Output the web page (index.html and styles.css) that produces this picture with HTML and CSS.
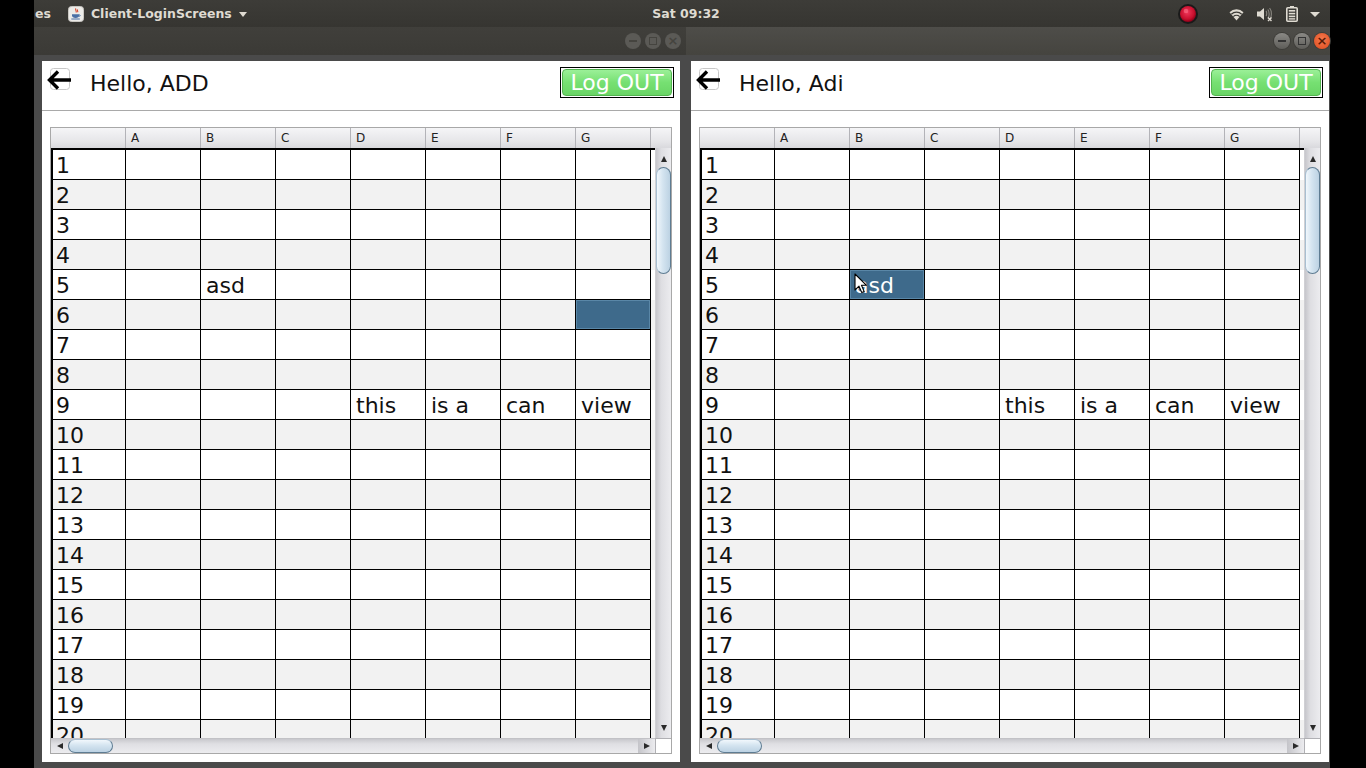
FILE: index.html
```html
<!DOCTYPE html>
<html>
<head>
<meta charset="utf-8">
<link rel="stylesheet" href="styles.css">
</head>
<body>
<div class="main">
  <div class="topbar">
    <div class="tb-left">
      <span class="tb-es">es</span>
      <svg class="java" width="16" height="16" viewBox="0 0 16 16"><rect x="0.5" y="0.5" width="15" height="15" rx="3" fill="#ecebe8" stroke="#c9c7c2"/><path d="M8 2.5c-1.5 1.5 1.2 2.2 0 4M9.6 3.5c-1 1 .8 1.5 0 2.8" stroke="#d8452c" stroke-width="1.1" fill="none"/><path d="M4 8.3h7.2v1.2c0 1.5-1.5 2.4-3.6 2.4S4 11 4 9.5z" fill="#4a6fa5"/><path d="M11.2 8.8c1.4 0 1.4 1.6 0 1.6" stroke="#4a6fa5" stroke-width="0.9" fill="none"/><path d="M3.3 13h8.5" stroke="#4a6fa5" stroke-width="1"/></svg>
      <span class="tb-title">Client-LoginScreens</span>
      <span class="tri"></span>
    </div>
    <div class="tb-clock">Sat 09:32</div>
    <div class="tb-right">
      <svg class="rec" width="22" height="22" viewBox="0 0 22 22"><defs><radialGradient id="rg" cx="0.45" cy="0.4" r="0.6"><stop offset="0" stop-color="#f0365a"/><stop offset="0.7" stop-color="#c8102e"/><stop offset="1" stop-color="#8a0018"/></radialGradient></defs><circle cx="11" cy="11" r="10" fill="#1a1a1a"/><circle cx="11" cy="11" r="8" fill="url(#rg)"/><circle cx="9" cy="8" r="2.3" fill="#ff7a90" opacity="0.55"/></svg>
      <svg class="wifi" width="15" height="14" viewBox="0 0 15 14"><path d="M7.5 13.5L0.5 5.2A10 10 0 0 1 14.5 5.2Z" fill="#dfdbd2"/><path d="M2.3 7.3A7.5 7.5 0 0 1 12.7 7.3" stroke="#3a3935" stroke-width="1.2" fill="none"/><path d="M4.3 9.6A4.6 4.6 0 0 1 10.7 9.6" stroke="#3a3935" stroke-width="1.2" fill="none"/></svg>
      <svg class="spk" width="17" height="16" viewBox="0 0 17 16"><path d="M1 5.5h3l4-3.5v12l-4-3.5H1z" fill="#dfdbd2"/><path d="M10 5c1 1 1 4 0 5M11.8 3.5c1.8 2 1.8 7 0 9M13.6 2c2.4 3 2.4 9 0 12" stroke="#8a8780" stroke-width="1.1" fill="none"/><path d="M12 11.5l3.5 3.5M15.5 11.5L12 15" stroke="#dfdbd2" stroke-width="1.4"/></svg>
      <svg class="bat" width="12" height="16" viewBox="0 0 12 16"><rect x="4" y="0" width="4" height="2" fill="#dfdbd2"/><rect x="0.8" y="1.8" width="10.4" height="13.4" rx="1" fill="none" stroke="#dfdbd2" stroke-width="1.6"/><rect x="2.8" y="4" width="6.4" height="1.6" fill="#dfdbd2"/><rect x="2.8" y="6.8" width="6.4" height="1.6" fill="#dfdbd2"/><rect x="2.8" y="9.6" width="6.4" height="1.6" fill="#dfdbd2"/><rect x="2.8" y="12.2" width="6.4" height="1.4" fill="#dfdbd2"/></svg>
      <span class="tri tri-r"></span>
    </div>
  </div>

  <div class="windows">
    <div class="win win-l">
      <div class="titlebar tb-inactive">
        <span class="wbtn"><span class="sym-min"></span></span>
        <span class="wbtn"><span class="sym-max"></span></span>
        <span class="wbtn"><span class="sym-x">×</span></span>
      </div>
      <div class="frame frame-l">
        <div class="panel">
          <div class="phead">
            <svg class="back" width="26" height="24" viewBox="0 0 26 24"><rect x="3.5" y="0.5" width="19" height="21" rx="3" fill="none" stroke="#c8c8c8"/><path d="M24 12H3M11 3.5L2.5 12L11 20.5" stroke="#000" stroke-width="3.4" fill="none" stroke-linejoin="miter"/></svg>
            <span class="hello">Hello, ADD</span>
            <div class="logout"><div class="logout-in">Log OUT</div></div>
          </div>
          <div class="sheet">
            <div class="colhead">
              <div class="hc hc0"></div><div class="hc">A</div><div class="hc">B</div><div class="hc">C</div><div class="hc">D</div><div class="hc">E</div><div class="hc">F</div><div class="hc">G</div><div class="hc-end"></div>
            </div>
            <div class="viewport">
              <div class="row"><div class="rh">1</div><div class="c"></div><div class="c"></div><div class="c"></div><div class="c"></div><div class="c"></div><div class="c"></div><div class="c"></div></div>
              <div class="row alt"><div class="rh">2</div><div class="c"></div><div class="c"></div><div class="c"></div><div class="c"></div><div class="c"></div><div class="c"></div><div class="c"></div></div>
              <div class="row"><div class="rh">3</div><div class="c"></div><div class="c"></div><div class="c"></div><div class="c"></div><div class="c"></div><div class="c"></div><div class="c"></div></div>
              <div class="row alt"><div class="rh">4</div><div class="c"></div><div class="c"></div><div class="c"></div><div class="c"></div><div class="c"></div><div class="c"></div><div class="c"></div></div>
              <div class="row"><div class="rh">5</div><div class="c"></div><div class="c">asd</div><div class="c"></div><div class="c"></div><div class="c"></div><div class="c"></div><div class="c"></div></div>
              <div class="row alt"><div class="rh">6</div><div class="c"></div><div class="c"></div><div class="c"></div><div class="c"></div><div class="c"></div><div class="c"></div><div class="c sel"></div></div>
              <div class="row"><div class="rh">7</div><div class="c"></div><div class="c"></div><div class="c"></div><div class="c"></div><div class="c"></div><div class="c"></div><div class="c"></div></div>
              <div class="row alt"><div class="rh">8</div><div class="c"></div><div class="c"></div><div class="c"></div><div class="c"></div><div class="c"></div><div class="c"></div><div class="c"></div></div>
              <div class="row"><div class="rh">9</div><div class="c"></div><div class="c"></div><div class="c"></div><div class="c">this</div><div class="c">is a</div><div class="c">can</div><div class="c">view</div></div>
              <div class="row alt"><div class="rh">10</div><div class="c"></div><div class="c"></div><div class="c"></div><div class="c"></div><div class="c"></div><div class="c"></div><div class="c"></div></div>
              <div class="row"><div class="rh">11</div><div class="c"></div><div class="c"></div><div class="c"></div><div class="c"></div><div class="c"></div><div class="c"></div><div class="c"></div></div>
              <div class="row alt"><div class="rh">12</div><div class="c"></div><div class="c"></div><div class="c"></div><div class="c"></div><div class="c"></div><div class="c"></div><div class="c"></div></div>
              <div class="row"><div class="rh">13</div><div class="c"></div><div class="c"></div><div class="c"></div><div class="c"></div><div class="c"></div><div class="c"></div><div class="c"></div></div>
              <div class="row alt"><div class="rh">14</div><div class="c"></div><div class="c"></div><div class="c"></div><div class="c"></div><div class="c"></div><div class="c"></div><div class="c"></div></div>
              <div class="row"><div class="rh">15</div><div class="c"></div><div class="c"></div><div class="c"></div><div class="c"></div><div class="c"></div><div class="c"></div><div class="c"></div></div>
              <div class="row alt"><div class="rh">16</div><div class="c"></div><div class="c"></div><div class="c"></div><div class="c"></div><div class="c"></div><div class="c"></div><div class="c"></div></div>
              <div class="row"><div class="rh">17</div><div class="c"></div><div class="c"></div><div class="c"></div><div class="c"></div><div class="c"></div><div class="c"></div><div class="c"></div></div>
              <div class="row alt"><div class="rh">18</div><div class="c"></div><div class="c"></div><div class="c"></div><div class="c"></div><div class="c"></div><div class="c"></div><div class="c"></div></div>
              <div class="row"><div class="rh">19</div><div class="c"></div><div class="c"></div><div class="c"></div><div class="c"></div><div class="c"></div><div class="c"></div><div class="c"></div></div>
              <div class="row alt"><div class="rh">20</div><div class="c"></div><div class="c"></div><div class="c"></div><div class="c"></div><div class="c"></div><div class="c"></div><div class="c"></div></div>
            </div>
            <div class="vsb">
              <div class="sb-btn"><span class="ar-up"></span></div>
              <div class="vthumb"></div>
              <div class="sb-fill"></div>
              <div class="sb-btn sb-btn-d"><span class="ar-down"></span></div>
            </div>
            <div class="hsb">
              <div class="sb-btn-h"><span class="ar-left"></span></div>
              <div class="hthumb"></div>
              <div class="sb-fill"></div>
              <div class="sb-btn-h sb-btn-r"><span class="ar-right"></span></div>
            </div>
            <div class="corner"></div>
          </div>
        </div>
      </div>
    </div>

    <div class="win win-r">
      <div class="titlebar tb-active">
        <span class="wbtn wbtn-a"><span class="sym-min"></span></span>
        <span class="wbtn wbtn-a"><span class="sym-max"></span></span>
        <span class="wbtn wbtn-close"><span class="sym-x">×</span></span>
      </div>
      <div class="frame frame-r">
        <div class="panel">
          <div class="phead">
            <svg class="back" width="26" height="24" viewBox="0 0 26 24"><rect x="3.5" y="0.5" width="19" height="21" rx="3" fill="none" stroke="#c8c8c8"/><path d="M24 12H3M11 3.5L2.5 12L11 20.5" stroke="#000" stroke-width="3.4" fill="none" stroke-linejoin="miter"/></svg>
            <span class="hello">Hello, Adi</span>
            <div class="logout"><div class="logout-in">Log OUT</div></div>
          </div>
          <div class="sheet">
            <div class="colhead">
              <div class="hc hc0"></div><div class="hc">A</div><div class="hc">B</div><div class="hc">C</div><div class="hc">D</div><div class="hc">E</div><div class="hc">F</div><div class="hc">G</div><div class="hc-end"></div>
            </div>
            <div class="viewport">
              <div class="row"><div class="rh">1</div><div class="c"></div><div class="c"></div><div class="c"></div><div class="c"></div><div class="c"></div><div class="c"></div><div class="c"></div></div>
              <div class="row alt"><div class="rh">2</div><div class="c"></div><div class="c"></div><div class="c"></div><div class="c"></div><div class="c"></div><div class="c"></div><div class="c"></div></div>
              <div class="row"><div class="rh">3</div><div class="c"></div><div class="c"></div><div class="c"></div><div class="c"></div><div class="c"></div><div class="c"></div><div class="c"></div></div>
              <div class="row alt"><div class="rh">4</div><div class="c"></div><div class="c"></div><div class="c"></div><div class="c"></div><div class="c"></div><div class="c"></div><div class="c"></div></div>
              <div class="row"><div class="rh">5</div><div class="c"></div><div class="c sel">asd<svg class="cursor" width="13" height="21" viewBox="0 0 13 21"><path d="M1 1V17L5 13.2L7.8 19.6L10.2 18.6L7.5 12.3H12.5Z" fill="#fff" stroke="#000" stroke-width="1.1" stroke-linejoin="round"/></svg></div><div class="c"></div><div class="c"></div><div class="c"></div><div class="c"></div><div class="c"></div></div>
              <div class="row alt"><div class="rh">6</div><div class="c"></div><div class="c"></div><div class="c"></div><div class="c"></div><div class="c"></div><div class="c"></div><div class="c"></div></div>
              <div class="row"><div class="rh">7</div><div class="c"></div><div class="c"></div><div class="c"></div><div class="c"></div><div class="c"></div><div class="c"></div><div class="c"></div></div>
              <div class="row alt"><div class="rh">8</div><div class="c"></div><div class="c"></div><div class="c"></div><div class="c"></div><div class="c"></div><div class="c"></div><div class="c"></div></div>
              <div class="row"><div class="rh">9</div><div class="c"></div><div class="c"></div><div class="c"></div><div class="c">this</div><div class="c">is a</div><div class="c">can</div><div class="c">view</div></div>
              <div class="row alt"><div class="rh">10</div><div class="c"></div><div class="c"></div><div class="c"></div><div class="c"></div><div class="c"></div><div class="c"></div><div class="c"></div></div>
              <div class="row"><div class="rh">11</div><div class="c"></div><div class="c"></div><div class="c"></div><div class="c"></div><div class="c"></div><div class="c"></div><div class="c"></div></div>
              <div class="row alt"><div class="rh">12</div><div class="c"></div><div class="c"></div><div class="c"></div><div class="c"></div><div class="c"></div><div class="c"></div><div class="c"></div></div>
              <div class="row"><div class="rh">13</div><div class="c"></div><div class="c"></div><div class="c"></div><div class="c"></div><div class="c"></div><div class="c"></div><div class="c"></div></div>
              <div class="row alt"><div class="rh">14</div><div class="c"></div><div class="c"></div><div class="c"></div><div class="c"></div><div class="c"></div><div class="c"></div><div class="c"></div></div>
              <div class="row"><div class="rh">15</div><div class="c"></div><div class="c"></div><div class="c"></div><div class="c"></div><div class="c"></div><div class="c"></div><div class="c"></div></div>
              <div class="row alt"><div class="rh">16</div><div class="c"></div><div class="c"></div><div class="c"></div><div class="c"></div><div class="c"></div><div class="c"></div><div class="c"></div></div>
              <div class="row"><div class="rh">17</div><div class="c"></div><div class="c"></div><div class="c"></div><div class="c"></div><div class="c"></div><div class="c"></div><div class="c"></div></div>
              <div class="row alt"><div class="rh">18</div><div class="c"></div><div class="c"></div><div class="c"></div><div class="c"></div><div class="c"></div><div class="c"></div><div class="c"></div></div>
              <div class="row"><div class="rh">19</div><div class="c"></div><div class="c"></div><div class="c"></div><div class="c"></div><div class="c"></div><div class="c"></div><div class="c"></div></div>
              <div class="row alt"><div class="rh">20</div><div class="c"></div><div class="c"></div><div class="c"></div><div class="c"></div><div class="c"></div><div class="c"></div><div class="c"></div></div>
            </div>
            <div class="vsb">
              <div class="sb-btn"><span class="ar-up"></span></div>
              <div class="vthumb"></div>
              <div class="sb-fill"></div>
              <div class="sb-btn sb-btn-d"><span class="ar-down"></span></div>
            </div>
            <div class="hsb">
              <div class="sb-btn-h"><span class="ar-left"></span></div>
              <div class="hthumb"></div>
              <div class="sb-fill"></div>
              <div class="sb-btn-h sb-btn-r"><span class="ar-right"></span></div>
            </div>
            <div class="corner"></div>
          </div>
        </div>
      </div>
    </div>
  </div>
</div>
</body>
</html>
```

FILE: styles.css
```css
* { box-sizing: border-box; }
html, body { margin: 0; padding: 0; }
body {
  background: #000;
  width: 1366px;
  height: 768px;
  overflow: hidden;
  font-family: "DejaVu Sans", sans-serif;
}
.main {
  margin-left: 34px;
  width: 1296px;
  height: 768px;
  display: flex;
  flex-direction: column;
}

/* ---------- top panel ---------- */
.topbar {
  height: 27px;
  flex: none;
  background: linear-gradient(#3d3c38, #363531);
  color: #dfdbd2;
  display: grid;
  grid-template-columns: 1fr auto 1fr;
  align-items: center;
  font-size: 12.5px;
  font-weight: bold;
}
.tb-left { display: flex; align-items: center; }
.tb-es { margin-left: 1px; }
.java { margin-left: 17px; display: block; }
.tb-title { margin-left: 7px; }
.tri {
  display: inline-block;
  width: 0; height: 0;
  border-left: 4.5px solid transparent;
  border-right: 4.5px solid transparent;
  border-top: 5px solid #dfdbd2;
  margin-left: 7px;
  margin-top: 1px;
}
.tb-clock { padding-left: 8px; }
.tb-right {
  justify-self: end;
  display: flex;
  align-items: center;
  padding-right: 10px;
}
.rec { display: block; margin-top: 1px; }
.wifi { display: block; margin-left: 30px; }
.spk { display: block; margin-left: 12px; }
.bat { display: block; margin-left: 13px; }
.tri-r { margin-left: 12px; border-left-width: 5px; border-right-width: 5px; border-top-width: 5px; }

/* ---------- windows ---------- */
.windows { display: flex; flex: 1; min-height: 0; }
.win { display: flex; flex-direction: column; }
.win-l { width: 652px; }
.win-r { width: 644px; }
.titlebar {
  height: 28px;
  flex: none;
  display: flex;
  justify-content: flex-end;
  align-items: center;
  gap: 4px;
}
.tb-inactive { background: linear-gradient(#403f3b, #3b3a36); padding-right: 5px; }
.tb-active { background: linear-gradient(#4e4d49, #45443f); padding-right: 0; }
.wbtn {
  width: 16px; height: 16px;
  border-radius: 50%;
  background: #5b5a56;
  display: flex;
  align-items: center;
  justify-content: center;
  color: #45443f;
}
.wbtn-a {
  background: linear-gradient(#8a8985, #5e5d59);
  box-shadow: 0 0 0 1px #3e3d39;
  color: #333;
}
.wbtn-close {
  background: radial-gradient(circle at 50% 40%, #f47a4f, #df4a1c);
  box-shadow: 0 0 0 1px #3e3d39;
  color: #5a1a06;
}
.sym-min { width: 8px; height: 1.5px; background: currentColor; }
.sym-max { width: 8px; height: 8px; border: 1.3px solid currentColor; }
.sym-x { font-size: 13px; line-height: 16px; font-weight: bold; }

.frame { flex: 1; background: #4a4a4a; min-height: 0; }
.frame-l { padding: 6px 6px 6px 8px; }
.frame-r { padding: 6px 1px 6px 5px; }
.panel {
  background: #fff;
  height: 100%;
  display: flex;
  flex-direction: column;
}

/* ---------- header ---------- */
.phead {
  height: 50px;
  flex: none;
  border-bottom: 1px solid #a9a9a9;
  display: flex;
  align-items: flex-start;
  padding: 6px 6px 0 5px;
}
.back { display: block; margin-top: 1px; }
.hello {
  margin-left: 17px;
  padding-top: 2px;
  font-size: 22px;
  line-height: 30px;
  color: #111;
}
.logout {
  margin-left: auto;
  width: 114px;
  height: 31px;
  border: 1px solid #000;
  padding: 1px;
}
.logout-in {
  height: 100%;
  border-radius: 4px;
  border: 1px solid #52b44f;
  background: linear-gradient(#9bf098, #76e072 50%, #6ad566);
  color: #fff;
  font-size: 22px;
  line-height: 26px;
  text-align: center;
}

/* ---------- sheet ---------- */
.sheet {
  margin: 16px 8px 0 8px;
  height: 627px;
  border: 1px solid #a8a8a8;
  display: grid;
  grid-template-columns: 604px 16px;
  grid-template-rows: 20px 590px 15px;
}
.colhead {
  grid-column: 1 / 3;
  display: flex;
  background: linear-gradient(#f5f5f7, #e6e6e9 65%, #d9d9dd);
}
.hc {
  width: 75px;
  flex: none;
  border-right: 1px solid #b3b3b8;
  font-size: 12px;
  line-height: 20px;
  padding-left: 5px;
  color: #222;
}
.hc-end { flex: 1; }

.viewport {
  border-top: 2px solid #000;
  border-left: 2px solid #000;
  overflow: hidden;
  background: #fff;
}
.row {
  display: flex;
  height: 30px;
  background: #fff;
}
.row.alt { background: #f2f2f2; }
.rh, .c {
  flex: none;
  height: 30px;
  border-right: 1px solid #000;
  border-bottom: 1px solid #000;
  font-size: 22px;
  line-height: 32px;
  color: #111;
  white-space: nowrap;
  overflow: hidden;
}
.rh { width: 73px; padding-left: 3px; }
.c { width: 75px; padding-left: 5px; }
.c.sel {
  background: #3e6a8b;
  box-shadow: inset 0 0 0 1px #5a87a7;
  color: #fff;
  position: relative;
  overflow: visible;
}
.cursor { position: absolute; left: 4px; top: 3px; }

/* ---------- scrollbars ---------- */
.vsb {
  display: flex;
  flex-direction: column;
  background: linear-gradient(to right, #c6c6cb, #dedee2 35%, #ececef);
  border-left: 1px solid #d0d0d4;
}
.sb-btn {
  height: 19px;
  flex: none;
  display: flex;
  justify-content: center;
  align-items: center;
  padding-top: 2px;
}
.sb-btn-d { height: 18px; padding-top: 0; padding-bottom: 2px; }
.sb-fill { flex: 1; }
.vthumb {
  height: 107px;
  flex: none;
  margin-left: 0;
  border-radius: 8px;
  border: 1px solid #5e7c92;
  border-left-color: #a8bfd1;
  background: linear-gradient(to right, #f1f7fc, #d4e4f0 45%, #bcd2e3);
}
.ar-up, .ar-down, .ar-left, .ar-right { width: 0; height: 0; display: block; }
.ar-up { border-left: 3.5px solid transparent; border-right: 3.5px solid transparent; border-bottom: 6px solid #2a2a2a; }
.ar-down { border-left: 3.5px solid transparent; border-right: 3.5px solid transparent; border-top: 6px solid #2a2a2a; }
.ar-left { border-top: 3.5px solid transparent; border-bottom: 3.5px solid transparent; border-right: 6px solid #2a2a2a; }
.ar-right { border-top: 3.5px solid transparent; border-bottom: 3.5px solid transparent; border-left: 6px solid #2a2a2a; }

.hsb {
  display: flex;
  background: linear-gradient(#c8c8cd, #dfdfe3 35%, #ececef);
  border-top: 1px solid #c2c2c6;
}
.sb-btn-h {
  width: 17px;
  flex: none;
  display: flex;
  align-items: center;
  justify-content: center;
}
.sb-btn-r {
  background: linear-gradient(to right, #c4c4c9, #ececef);
}
.hthumb {
  width: 45px;
  flex: none;
  border-radius: 8px;
  border: 1px solid #5e7c92;
  border-top-color: #a8bfd1;
  background: linear-gradient(#f1f7fc, #d4e4f0 45%, #bcd2e3);
}
.corner {
  background: #fff;
  border-top: 1px solid #b0b0b4;
  border-left: 1px solid #b0b0b4;
}
```
